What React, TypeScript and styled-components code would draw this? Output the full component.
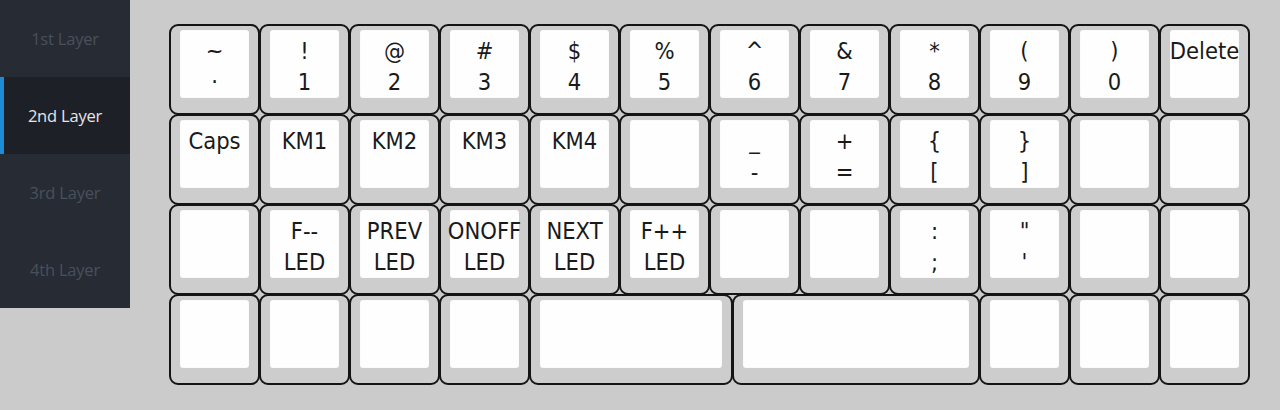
import styled, { createGlobalStyle } from "styled-components";

const GlobalStyle = createGlobalStyle`
    body {
        margin: 0;
        background: #cbcbcb;
        font-family: "Open Sans", "Liberation Sans", sans-serif;
    }
`

type KeyDef = {
    top?: string
    bottom?: string
    units?: number
}

const layers = ['1st Layer', '2nd Layer', '3rd Layer', '4th Layer']

const rows: KeyDef[][] = [
    [
        { top: '~', bottom: '·' }, { top: '!', bottom: '1' }, { top: '@', bottom: '2' },
        { top: '#', bottom: '3' }, { top: '$', bottom: '4' }, { top: '%', bottom: '5' },
        { top: '^', bottom: '6' }, { top: '&', bottom: '7' }, { top: '*', bottom: '8' },
        { top: '(', bottom: '9' }, { top: ')', bottom: '0' }, { top: 'Delete' },
    ],
    [
        { top: 'Caps' }, { top: 'KM1' }, { top: 'KM2' }, { top: 'KM3' }, { top: 'KM4' }, {},
        { top: '_', bottom: '-' }, { top: '+', bottom: '=' }, { top: '{', bottom: '[' },
        { top: '}', bottom: ']' }, {}, {},
    ],
    [
        {}, { top: 'F--', bottom: 'LED' }, { top: 'PREV', bottom: 'LED' },
        { top: 'ONOFF', bottom: 'LED' }, { top: 'NEXT', bottom: 'LED' },
        { top: 'F++', bottom: 'LED' }, {}, {}, { top: ':', bottom: ';' },
        { top: '"', bottom: "'" }, {}, {},
    ],
    [
        {}, {}, {}, {}, { units: 2.25 }, { units: 2.75 }, {}, {}, {},
    ],
]

export default function App() {
    return (
        <>
            <GlobalStyle />
            <Page>
                <Sidebar>
                    {layers.map((name, i) => (
                        <LayerItem key={name} $active={i === 1}>{name}</LayerItem>
                    ))}
                </Sidebar>
                <Keyboard>
                    {rows.map((row, r) => (
                        <Row key={r}>
                            {row.map((k, c) => (
                                <Key key={c} $units={k.units ?? 1}>
                                    <Cap>
                                        {k.top && <Legend>{k.top}</Legend>}
                                        {k.bottom && <Legend>{k.bottom}</Legend>}
                                    </Cap>
                                </Key>
                            ))}
                        </Row>
                    ))}
                </Keyboard>
            </Page>
        </>
    );
}

const Page = styled.div`
    display: flex;
    align-items: flex-start;
    width: 1280px;
    height: 410px;
`
const Sidebar = styled.nav`
    width: 130px;
    flex: 0 0 130px;
    display: flex;
    flex-direction: column;
    background: #272b34;
`
const LayerItem = styled.div<{ $active?: boolean }>`
    height: 77px;
    display: flex;
    align-items: center;
    justify-content: center;
    font-family: "Open Sans", sans-serif;
    font-size: 16.5px;
    letter-spacing: -0.2px;
    color: ${p => p.$active ? '#e4e6ea' : '#4a505b'};
    background: ${p => p.$active ? '#1d2026' : 'transparent'};
    box-shadow: ${p => p.$active ? 'inset 4px 0 0 #1d8bd6' : 'none'};
`
const Keyboard = styled.div`
    margin: 24px 0 0 39px;
    display: flex;
    flex-direction: column;
`
const Row = styled.div`
    display: flex;
    height: 90px;
`
const Key = styled.div<{ $units: number }>`
    box-sizing: border-box;
    flex: 0 0 ${p => p.$units * 90 + 1}px;
    min-width: 0;
    height: 91px;
    margin-right: -1px;
    border: 2px solid #141414;
    border-radius: 9px;
    background: #cdcdcd;
    display: flex;
`
const Cap = styled.div`
    flex: 1;
    min-width: 0;
    margin: 4px 9px 15px 9px;
    padding-top: 6px;
    border-radius: 3px;
    background: #fefefe;
    box-shadow: inset 0 0 1px #e2e2e2;
    display: flex;
    flex-direction: column;
    align-items: center;
`
const Legend = styled.span`
    font-family: "DejaVu Sans", sans-serif;
    font-stretch: condensed;
    font-size: 23.5px;
    line-height: 31px;
    color: #1a1a1a;
    white-space: nowrap;
`
